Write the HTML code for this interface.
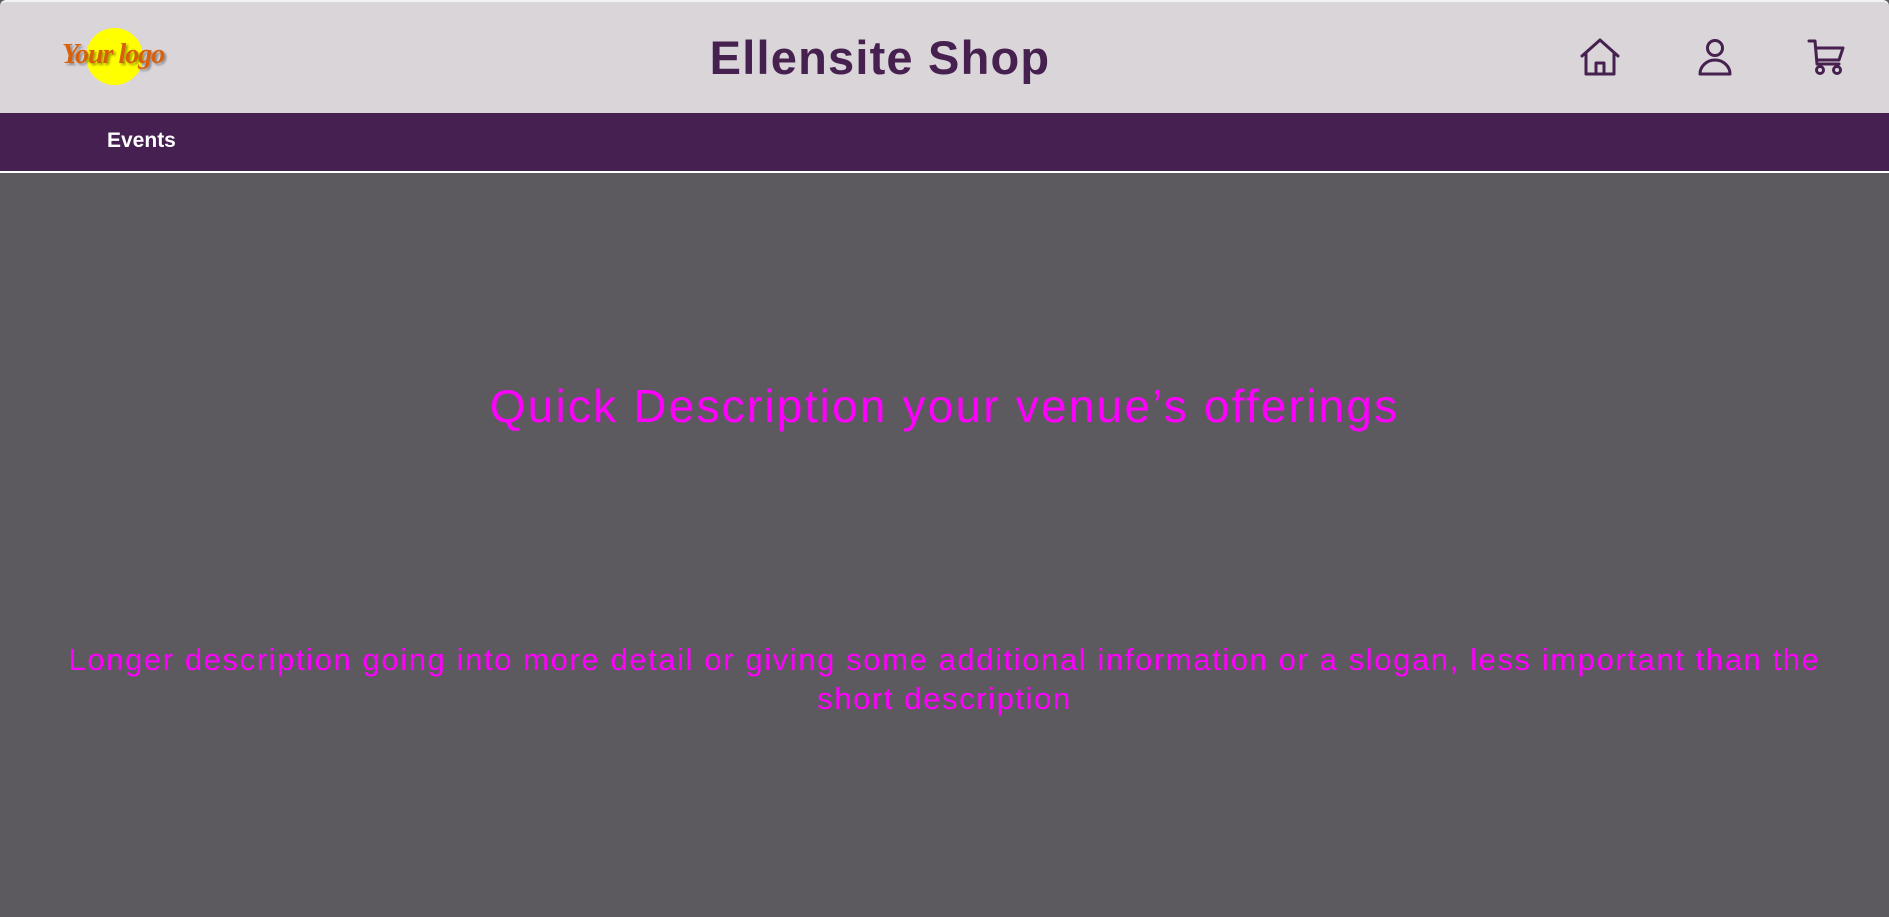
<!DOCTYPE html>
<html><head><meta charset="utf-8"><style>
*{margin:0;padding:0;box-sizing:border-box}
html,body{width:1889px;height:917px;overflow:hidden;background:#5c5a5e;font-family:"Liberation Sans",sans-serif}
.hdr{position:absolute;left:0;top:0;width:1889px;height:113px;background:#dad5d9;border-top:2px solid #f2f2f2;border-radius:6px 6px 0 0}
.nav{position:absolute;left:0;top:113px;width:1889px;height:58px;background:#472052}
.line{position:absolute;left:0;top:171px;width:1889px;height:2px;background:#fff}
.circle{position:absolute;left:86px;top:28px;width:57px;height:57px;border-radius:50%;background:#ffff00}
.logo{position:absolute;left:62px;top:39px;font-family:"Liberation Serif",serif;font-style:italic;font-weight:bold;font-size:28px;color:#d9600a;text-shadow:2px 2px 2px rgba(0,0,0,.35);letter-spacing:-1px}
.title{position:absolute;left:0;width:1760px;text-align:center;top:30px;font-size:47px;font-weight:bold;color:#46204f;letter-spacing:1.2px}
.ev{position:absolute;left:107px;top:129px;color:#fff;font-weight:bold;font-size:21px}
.ic{position:absolute;top:38px}
h1{position:absolute;left:0;width:1889px;top:379px;text-align:center;color:#ff00ff;font-size:46px;font-weight:normal;letter-spacing:2.2px}
p{position:absolute;left:57px;width:1775px;top:640px;text-align:center;color:#ff00ff;font-size:31px;line-height:39px;letter-spacing:1.6px}
</style></head><body>
<div class="hdr"></div>
<div class="circle"></div>
<div class="logo">Your logo</div>
<div class="title">Ellensite Shop</div>
<svg class="ic" style="left:1580px" width="40" height="40" viewBox="0 0 40 40" fill="none" stroke="#46204f" stroke-width="3" stroke-linejoin="round" stroke-linecap="round"><path d="M2 18 L20 2 L38 18 M6 15 V36 H34 V15 M16 36 V25 H24 V36"/></svg>
<svg class="ic" style="left:1695px" width="40" height="40" viewBox="0 0 40 40" fill="none" stroke="#46204f" stroke-width="3" stroke-linejoin="round"><circle cx="20" cy="10" r="7.5"/><path d="M5 36 A15 14 0 0 1 35 36 Z"/></svg>
<svg class="ic" style="left:1807px" width="40" height="40" viewBox="0 0 40 40" fill="none" stroke="#46204f" stroke-width="3" stroke-linejoin="round" stroke-linecap="round"><path d="M2 3 H8 L10 26 H32 M9 10 H36 L32 22 H10"/><circle cx="13" cy="32" r="3.5"/><circle cx="30" cy="32" r="3.5"/></svg>
<div class="nav"></div>
<div class="line"></div>
<div class="ev">Events</div>
<h1>Quick Description your venue’s offerings</h1>
<p>Longer description going into more detail or giving some additional information or a slogan, less important than the short description</p>
</body></html>
